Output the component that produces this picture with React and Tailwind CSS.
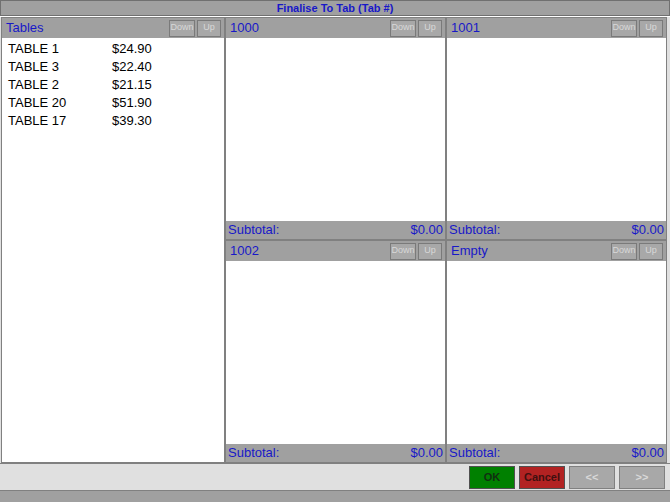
const F = { fontFamily: '"Liberation Sans", Arial, sans-serif' };

function SmallBtn({ children }) {
  return (
    <div className="h-[17px] flex items-center justify-center border border-[#7a7a7a] bg-[#a8a8a8] text-[#d8d8d8] text-[9px]" style={{ width: children === 'Down' ? 26 : 24 }}>
      {children}
    </div>
  );
}

function Header({ title }) {
  return (
    <div className="h-[20px] bg-[#a0a0a0] flex items-center pl-[4px] pr-[3px] shrink-0">
      <span className="text-[13px] text-[#1818c8] flex-1">{title}</span>
      <div className="flex gap-[2px]"><SmallBtn>Down</SmallBtn><SmallBtn>Up</SmallBtn></div>
    </div>
  );
}

function TabPanel({ title }) {
  return (
    <div className="flex flex-col flex-1 border border-[#808080] bg-white min-h-0">
      <Header title={title} />
      <div className="flex-1 bg-white" />
      <div className="h-[18px] bg-[#a0a0a0] flex items-center justify-between px-[2px] text-[13px] text-[#1818c8] shrink-0">
        <span>Subtotal:</span><span>$0.00</span>
      </div>
    </div>
  );
}

export default function App() {
  const tables = [['TABLE 1', '$24.90'], ['TABLE 3', '$22.40'], ['TABLE 2', '$21.15'], ['TABLE 20', '$51.90'], ['TABLE 17', '$39.30']];
  return (
    <div className="w-[670px] h-[502px] bg-[#a0a0a0] flex flex-col overflow-hidden" style={F}>
      <div className="h-[16px] border border-[#707070] bg-[#a0a0a0] flex items-center justify-center text-[11px] font-bold text-[#1818c8] shrink-0">
        Finalise To Tab (Tab #)
      </div>
      <div className="h-[447px] flex bg-[#e0e0e0] border-t border-white">
        <div className="w-[224px] ml-[1px] flex flex-col border border-[#808080] bg-white">
          <Header title="Tables" />
          <div className="pt-[2px] pl-[6px]">
            {tables.map(([n, p]) => (
              <div key={n} className="flex h-[18px] items-center text-[13px] text-black">
                <span className="w-[104px]">{n}</span><span>{p}</span>
              </div>
            ))}
          </div>
        </div>
        <div className="flex-1 grid grid-cols-2 grid-rows-2 mr-[3px]">
          <TabPanel title="1000" />
          <TabPanel title="1001" />
          <TabPanel title="1002" />
          <TabPanel title="Empty" />
        </div>
      </div>
      <div className="h-[27px] bg-[#e0e0e0] border-t border-[#808080] flex items-center justify-end gap-[4px] pr-[5px] text-[11px] font-bold shrink-0">
        <div className="w-[46px] h-[23px] bg-[#008000] border border-[#505050] flex items-center justify-center text-[#103010]">OK</div>
        <div className="w-[46px] h-[23px] bg-[#b22222] border border-[#505050] flex items-center justify-center text-[#401010]">Cancel</div>
        <div className="w-[46px] h-[23px] bg-[#a8a8a8] border border-[#808080] flex items-center justify-center text-[#d8d8d8]">&lt;&lt;</div>
        <div className="w-[46px] h-[23px] bg-[#a8a8a8] border border-[#808080] flex items-center justify-center text-[#d8d8d8]">&gt;&gt;</div>
      </div>
      <div className="flex-1 bg-[#a0a0a0] border-t border-[#808080]" />
    </div>
  );
}
